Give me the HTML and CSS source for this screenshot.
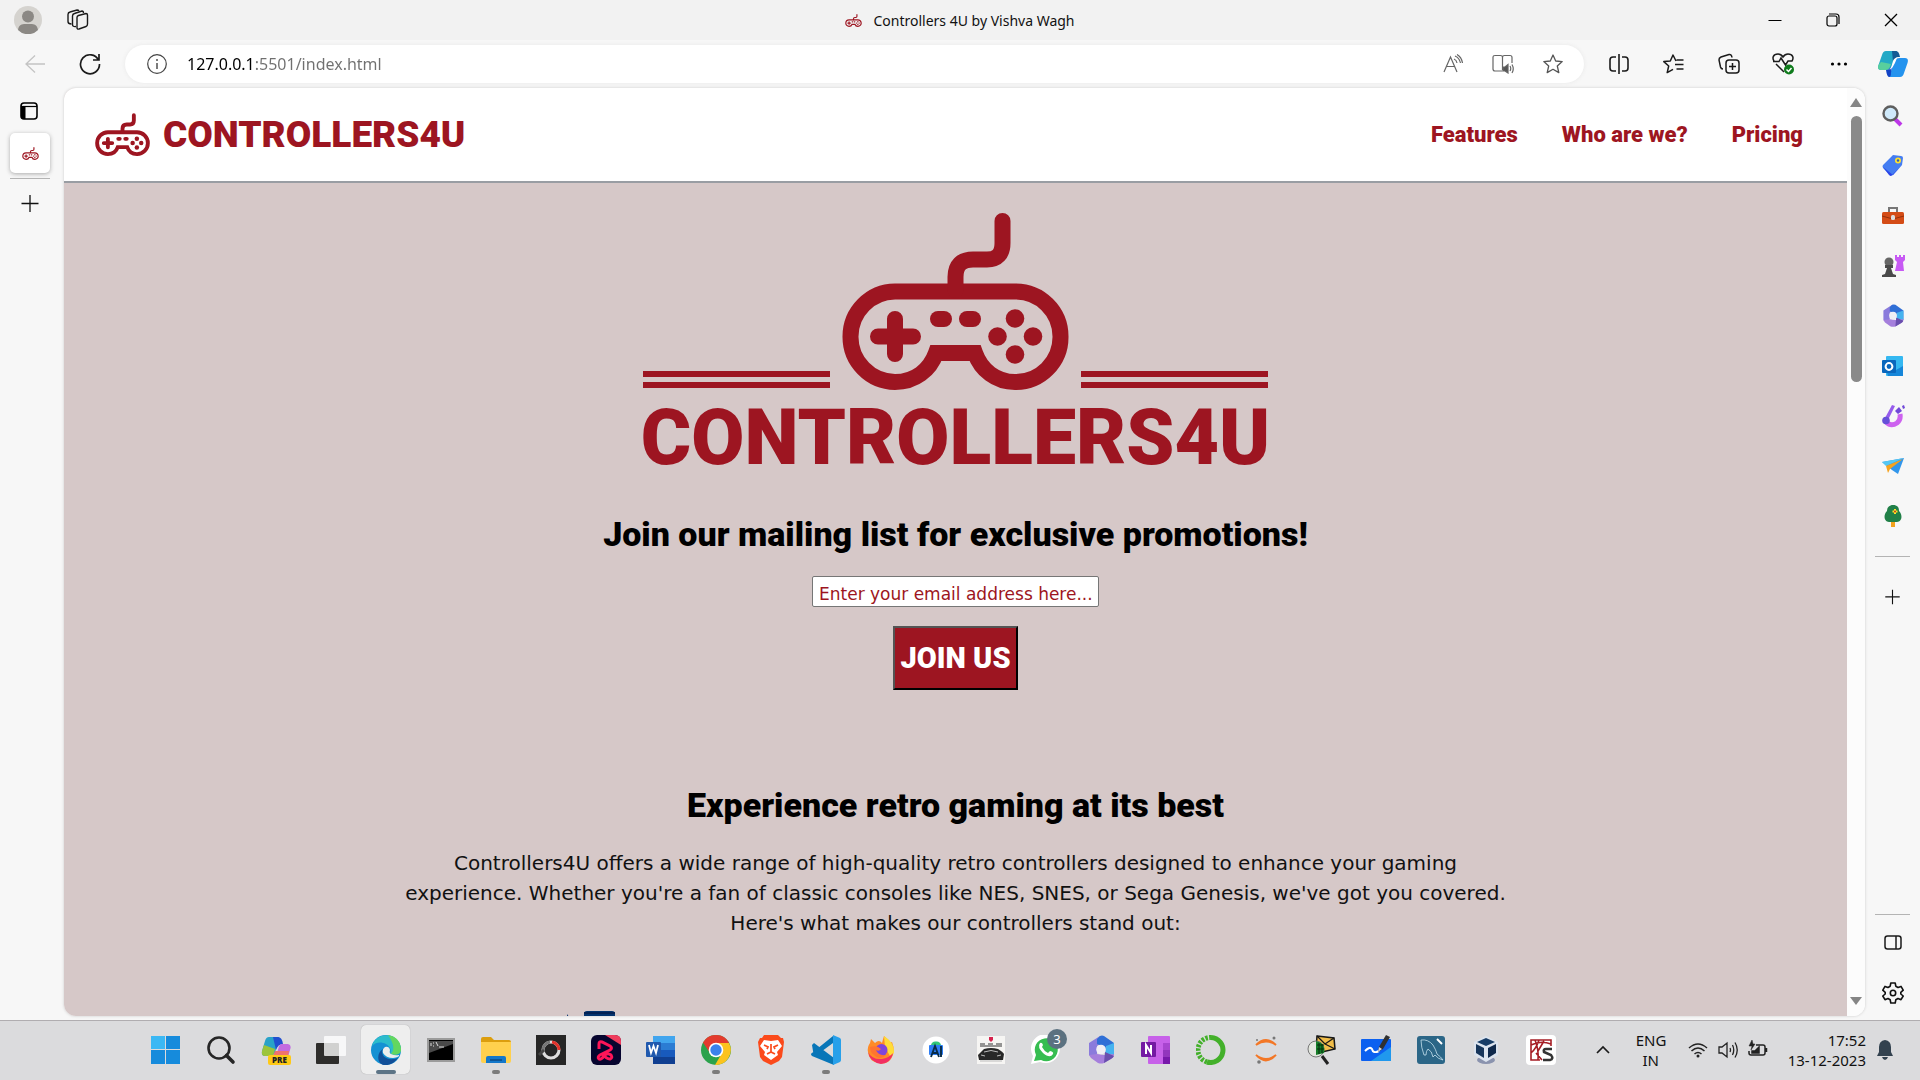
FILE: index.html
```html
<!DOCTYPE html>
<html lang="en">
<head>
<meta charset="utf-8">
<title>Controllers 4U by Vishva Wagh</title>
<link rel="stylesheet" href="styles.css">
</head>
<body>
<svg class="defs" aria-hidden="true">
  <symbol id="pad" viewBox="842 212 227 178">
    <g fill="none" stroke="#9d1521" stroke-width="16">
      <path d="M895 291.500H1015A45 45 0 0 1 1060.500 336.500A45 45 0 0 1 1015 382C996 382 981 370 975 353H936C930 370 915 382 895 382A45 45 0 0 1 850.500 336.500A45 45 0 0 1 895 291.500Z"/>
      <path stroke-linecap="round" d="M955.500 290V277Q955.500 259.500 973 259.500H987Q1002.500 259.500 1002.500 243V221M878 336.500H913M895 319V354"/>
    </g>
    <g fill="#9d1521"><rect x="930" y="311" width="22" height="16" rx="8"/><rect x="959" y="311" width="22" height="16" rx="8"/><circle cx="1015" cy="318.500" r="9.300"/><circle cx="1015" cy="354.500" r="9.300"/><circle cx="997.500" cy="336.500" r="9.300"/><circle cx="1033" cy="336.500" r="9.300"/></g>
  </symbol>
  <symbol id="plus" viewBox="0 0 20 20"><path d="M10 2V19M1.500 10.500H18.500" fill="none" stroke="#111" stroke-width="1.300"/></symbol>
  <symbol id="m365" viewBox="0 0 30 30">
    <path d="M14 1L3 8V20L8 24L11 19V11L21 5Z" fill="#8a7bdc"/>
    <path d="M14 1Q16 0 18 1L28 8V20L20 17L19 12L11 9V4Z" fill="#2f6fd6"/>
    <path d="M20 11L28 8V20L19 19Z" fill="#46b3ef"/>
    <path d="M3 20L11 19L18 20L28 19Q28 22 26 23L18 28Q15 29 12 28L5 23Z" fill="#a57fdc"/>
    <path d="M19 17L28 21Q27 23 25 24L18 28Z" fill="#6a4fae"/>
    <circle cx="15" cy="14.500" r="4.800" fill="#f0eff5"/>
  </symbol>
</svg>

<header class="titlebar">
  <div class="titlebar-left">
    <button class="icon-btn" aria-label="Profile"><svg width="28" height="28" viewBox="0 0 28 28"><circle cx="14" cy="14" r="14" fill="#d5d3cf"/><circle cx="14" cy="10.500" r="6" fill="#8b8884"/><path d="M4 24C5 17 10 18 14 18S23 17 24 24A14 14 0 0 1 4 24Z" fill="#8b8884"/></svg></button>
    <button class="icon-btn" aria-label="Workspaces"><svg width="22" height="22" viewBox="0 0 22 22" fill="none" stroke="#1b1b1b" stroke-width="1.400"><path d="M10 8.500Q10 7 11.500 6.500L19 4.500Q20.500 4.500 20.500 6V15Q20.500 17 19 17.500L12 20Q10 20.500 10 18.500Z"/><path d="M9 17.500Q5.500 18 5.500 15.500V7Q5.500 5 7.500 4.500L15 2Q16.500 2 16.500 4"/><path d="M4.500 15Q1 15 1 12.500V5.500Q1 3.500 3 3L10 1Q11.500 1 12 2"/></svg></button>
  </div>
  <div class="page-title"><svg width="17" height="13"><use href="#pad"/></svg><span>Controllers 4U by Vishva Wagh</span></div>
  <div class="window-controls">
    <button class="icon-btn" aria-label="Minimize"><svg width="14" height="14"><path d="M0.500 7.500H13.500" stroke="#000"/></svg></button>
    <button class="icon-btn" aria-label="Restore"><svg width="14" height="14" fill="none" stroke="#000" stroke-width="1.200"><rect x="1" y="3" width="10" height="10" rx="2"/><path d="M3 1H10Q13 1 13 4V11"/></svg></button>
    <button class="icon-btn" aria-label="Close"><svg width="14" height="14"><path d="M1 1L13 13M13 1L1 13" stroke="#000" stroke-width="1.300"/></svg></button>
  </div>
</header>

<div class="toolbar">
  <button class="icon-btn cell" aria-label="Back"><svg width="20" height="18" viewBox="0 0 20 18" fill="none" stroke="#c4c4c4" stroke-width="1.300"><path d="M20 9H1M10 0.500L1 9L10 17.500"/></svg></button>
  <button class="icon-btn cell" aria-label="Refresh"><svg width="22" height="22" viewBox="0 0 22 22" fill="none" stroke="#1b1b1b" stroke-width="1.700"><path d="M19.500 7A9.500 9.500 0 1 0 20.500 11M20 1V7H14"/></svg></button>
  <form class="address">
    <button type="button" class="icon-btn" aria-label="Site information"><svg width="20" height="20" fill="none" stroke="#444" stroke-width="1.200"><circle cx="10" cy="10" r="9.300"/><path d="M10 9V15M10 5V7" stroke-width="1.400"/></svg></button>
    <input class="url" type="text" aria-label="Address" value="127.0.0.1:5501/index.html">
    <button type="button" class="icon-btn tool" aria-label="Read aloud"><svg width="20" height="20" fill="none" stroke="#666" stroke-width="1.200"><path d="M1 18L7.500 3L14 18M3.500 12.500H11.500M11 5Q13.500 6 14 9M12 2Q16.500 4 17.500 9M14 0.500Q18.500 3 19.500 9"/></svg></button>
    <button type="button" class="icon-btn tool" aria-label="Immersive reader"><svg width="22" height="20" fill="none" stroke="#666" stroke-width="1.200"><path d="M10.500 2V16M10.500 17H3Q1 17 1 15V3Q1 1.500 3 1.500H8.500Q10.500 1.500 10.500 3.500Q10.500 1.500 12.500 1.500H18Q20 1.500 20 3.500V9"/><path d="M11 13H13L16 10.500V19L13 17H11Z" fill="#555"/><path d="M18 12Q19.500 14.500 18 17M20 10.500Q22.500 15 20 19"/></svg></button>
    <button type="button" class="icon-btn tool" aria-label="Add to favorites"><svg width="20" height="20" viewBox="0 0 20 20" fill="none" stroke="#555" stroke-width="1.300" stroke-linejoin="round"><path d="M10 1L12.700 7L19.200 7.600L14.300 12L15.800 18.600L10 15.300L4.200 18.600L5.700 12L.8 7.600L7.300 7Z"/></svg></button>
  </form>
  <button class="icon-btn cell" aria-label="Split screen"><svg width="20" height="20" fill="none" stroke="#1b1b1b" stroke-width="1.600"><path d="M10 0V20M7 3H4Q1 3 1 6V14Q1 17 4 17H7M13 3H16Q19 3 19 6V14Q19 17 16 17H13"/></svg></button>
  <button class="icon-btn cell" aria-label="Favorites"><svg width="21" height="20" fill="none" stroke="#1b1b1b" stroke-width="1.500" stroke-linejoin="round"><path d="M13 7L10 1L7.300 7L.8 7.600L5.700 12L4.200 18.600L10 15.300M13.500 6H20.500M12 10.500H20.500M13.500 15H20.500"/></svg></button>
  <button class="icon-btn cell" aria-label="Collections"><svg width="22" height="22" fill="none" stroke="#1b1b1b" stroke-width="1.500"><rect x="8" y="7" width="13" height="13" rx="3"/><path d="M14.500 10V17M11 13.500H18M5 16Q3 16 2.500 14L1 7Q.8 5 3 4L11 1.500Q13.500 1 14 4.500"/></svg></button>
  <button class="icon-btn cell" aria-label="Browser essentials"><svg width="23" height="23" fill="none" stroke="#1b1b1b" stroke-width="1.500"><path d="M2 9C0 6 1 2 6 2Q9 2 11 5Q13 2 16 2C21 2 22 6 20 9H16L13.500 13L9 6L7 9.500H1M4 12L12 20"/><circle cx="17" cy="17.500" r="5" fill="#0f7b1c" stroke="none"/><path d="M14.500 17.500L16.500 19.500L19.500 16" stroke="#fff"/></svg></button>
  <button class="icon-btn cell" aria-label="Settings and more"><svg width="18" height="6"><circle cx="2.500" cy="3" r="1.600"/><circle cx="9" cy="3" r="1.600"/><circle cx="15.500" cy="3" r="1.600"/></svg></button>
  <button class="icon-btn copilot" aria-label="Copilot"><svg width="30" height="26" viewBox="0 0 30 26"><path d="M8 0H19L14 15Q12 19 8 19H3Q-1 19 .5 14L4 4Q5 0 8 0Z" fill="#23a9c6"/><path d="M3 11L13 13Q11 19 8 19H3Q-1 19 .5 14Z" fill="#58cf9d"/><path d="M14 0H18Q21 0 22 6H20Q17 6 15 11Z" fill="#145a95"/><path d="M22 7H27Q31 7 29.500 12L26 22Q25 26 22 26H11L16 11Q17 7 22 7Z" fill="#2493ee"/><path d="M8 19Q12 19 14 14L13 22Q13 26 11 26Q9 26 8 19Z" fill="#1243c5"/><path d="M15 10Q16 7 19 7Q15 18 11 19Q13 18 15 10Z" fill="#fff"/></svg></button>
</div>

<div class="workspace">
  <aside class="tabs">
    <button class="icon-btn tab-toggle" aria-label="Tab actions"><svg width="18" height="18"><rect x="1" y="1" width="16" height="16" rx="3" fill="none" stroke="#000" stroke-width="1.600"/><path d="M1 4.500H17" stroke="#000" stroke-width="1.200"/><path d="M1 4H5.500V17H3L1 15Z"/></svg></button>
    <button class="tab" aria-label="Controllers 4U by Vishva Wagh"><svg width="17" height="13"><use href="#pad"/></svg></button>
    <hr>
    <button class="icon-btn new-tab" aria-label="New tab"><svg width="20" height="20"><use href="#plus"/></svg></button>
  </aside>

  <div class="viewport">
    <div class="site">
      <header class="site-header">
        <a class="brand" href="#top"><svg width="55" height="43"><use href="#pad"/></svg><span>CONTROLLERS4U</span></a>
        <nav><a href="#features">Features</a><a href="#about">Who are we?</a><a href="#pricing">Pricing</a></nav>
      </header>
      <main id="top">
        <section class="hero">
          <div class="emblem">
            <div class="bars"></div>
            <svg width="227" height="178"><use href="#pad"/></svg>
            <div class="bars"></div>
          </div>
          <h1>CONTROLLERS4U</h1>
          <h2>Join our mailing list for exclusive promotions!</h2>
          <form class="signup">
            <input type="email" aria-label="Email address" placeholder="Enter your email address here...">
            <button type="button">JOIN US</button>
          </form>
        </section>
        <section class="features" id="features">
          <h2>Experience retro gaming at its best</h2>
          <p>Controllers4U offers a wide range of high-quality retro controllers designed to enhance your gaming experience. Whether you're a fan of classic consoles like NES, SNES, or Sega Genesis, we've got you covered. Here's what makes our controllers stand out:</p>
          <svg class="art" width="780" height="60" viewBox="0 0 780 60"><path d="M19 60V31L1 3V60Z" fill="#07336d"/><rect x="18" y="0" width="31" height="50" rx="3" fill="#04346f"/><path d="M18 2H49" stroke="#042254" stroke-width="2"/></svg>
        </section>
      </main>
    </div>
    <div class="scrollbar" aria-hidden="true">
      <svg width="12" height="10"><path d="M6 0L12 9H0Z" fill="#858585"/></svg>
      <div class="thumb"></div>
      <svg width="12" height="10"><path d="M6 9L0 1H12Z" fill="#858585"/></svg>
    </div>
  </div>

  <aside class="sidebar">
    <button class="icon-btn" aria-label="Search"><svg width="24" height="24"><path d="M14 15L20 21" stroke="#bd36e8" stroke-width="4"/><circle cx="9.500" cy="9.500" r="7" fill="#cfe9fa" stroke="#5e5e5e" stroke-width="2.400"/></svg></button>
    <button class="icon-btn" aria-label="Shopping"><svg width="24" height="24"><path d="M12 1L20 2Q22 2 22 4L21 11L12 21Q10 22 9 21L2 14Q1 12 2 11Z" fill="#447df2"/><path d="M2 13L12 21L21 11L10 22Q9 22 8 21Z" fill="#2b45e8"/><circle cx="17" cy="6.500" r="3" fill="#ffe02e"/><circle cx="17" cy="6.500" r="1.200" fill="#2b60b8"/></svg></button>
    <button class="icon-btn" aria-label="Tools"><svg width="24" height="24"><path d="M8 8V4H16V8" fill="none" stroke="#777" stroke-width="2"/><rect x="1" y="8" width="22" height="12" rx="1.500" fill="#d44c16"/><path d="M1 12L12 15L23 12" stroke="#92300c" fill="none"/><rect x="10" y="11" width="4" height="5" rx="1.500" fill="#ddd"/></svg></button>
    <button class="icon-btn" aria-label="Games"><svg width="24" height="24"><path d="M14 1H16V3H18V1H20V3H22V1H24V6L22 8L23 17H14L16 8L14 6Z" fill="#c759f4"/><circle cx="8" cy="8" r="4.500" fill="#666"/><path d="M4 11H12V14H10L12 20L15 21V23H1V21L4 20L6 14H4Z" fill="#4a4a4a"/></svg></button>
    <button class="icon-btn" aria-label="Microsoft 365"><svg width="24" height="24"><use href="#m365"/></svg></button>
    <button class="icon-btn" aria-label="Outlook"><svg width="24" height="24"><rect x="5" y="2" width="17" height="20" rx="1" fill="#35b8f1"/><path d="M22 12V22H7L5 15L15 16Z" fill="#1686d9"/><rect x="1" y="6" width="14" height="13" rx="1" fill="#0a67bd"/><circle cx="8" cy="12.500" r="3.400" fill="none" stroke="#fff" stroke-width="2"/></svg></button>
    <button class="icon-btn" aria-label="Drop"><svg width="24" height="24"><path d="M5 18Q10 23 16 19Q20 16 19 10" fill="none" stroke="#cd62ef" stroke-width="5"/><path d="M11 1L14 2L7 16L4 14Z" fill="#965cec"/><circle cx="5" cy="16.500" r="3.800" fill="#6650d8"/><path d="M14 7L18 3L21 7L17 10ZM21 2L23 1L24 4L22 5Z" fill="#7048d8"/></svg></button>
    <button class="icon-btn" aria-label="Send"><svg width="24" height="24"><path d="M1 8L23 4L17 20L11 16Z" fill="#3296eb"/><path d="M1 8L23 4L5 12Z" fill="#55c7f3"/><path d="M5 12L22 5L9 15L7 19Z" fill="#f6a31e"/></svg></button>
    <button class="icon-btn" aria-label="Tree"><svg width="24" height="24"><rect x="10" y="15" width="4" height="8" fill="#f2a21e"/><path d="M12 1C17 1 18 4 18 7C22 11 21 18 16 18H8C3 18 2 11 6 7C6 4 8 1 12 1Z" fill="#218048"/><path d="M14 5V10M11.500 7.500H16.500" stroke="#ffe229" stroke-width="2"/><circle cx="14" cy="7.500" r="1" fill="#c1381d"/></svg></button>
    <hr>
    <button class="icon-btn add" aria-label="Customize"><svg width="17" height="17"><use href="#plus"/></svg></button>
    <div class="spacer"></div>
    <hr>
    <button class="icon-btn pane" aria-label="Hide sidebar"><svg width="18" height="15" fill="none" stroke="#1b1b1b" stroke-width="1.500"><rect x="1" y="1" width="16" height="13" rx="2.500"/><path d="M12 1V14"/></svg></button>
    <button class="icon-btn gear" aria-label="Settings"><svg width="22" height="22" viewBox="0 0 22 22" fill="none" stroke="#111" stroke-width="1.600" stroke-linejoin="round"><path d="M8.800 1H13.200L13.800 4.200L16 5.500L19 4.400L21.200 8.200L18.800 10.300V12L21.200 14L19 17.700L16 16.500L13.800 17.800L13.200 21H8.800L8.200 17.800L6 16.500L3 17.700L.8 14L3.200 12V10.300L.8 8.200L3 4.400L6 5.500L8.200 4.200Z"/><circle cx="11" cy="11" r="2.700"/></svg></button>
  </aside>
</div>

<footer class="taskbar">
  <div class="apps">
    <button aria-label="Start"><svg width="30" height="30"><path d="M0 1H14V14H0ZM15 1H29V14H15ZM0 15H14V29H0ZM15 15H29V29H15Z" fill="#168bdc"/><path d="M0 1H14V14H0Z" fill="#3bb8f4"/></svg></button>
    <button aria-label="Search"><svg width="30" height="30" fill="none" stroke="#262626"><circle cx="13" cy="13" r="10.500" stroke-width="2.600"/><path d="M20.500 20.500L27 27" stroke-width="3.600" stroke-linecap="round"/></svg></button>
    <button aria-label="Copilot preview"><svg width="30" height="30"><path d="M8 2H18L14 18Q12 21 9 21H4Q0 21 1 16L4 6Q5 2 8 2Z" fill="#29a2c8"/><path d="M3 10L14 14L12 21H4Q0 21 1 16Z" fill="#9bc43b"/><path d="M12 2H17Q21 2 22 9Q17 9 15 15Z" fill="#214fd0"/><path d="M20 9H27Q31 10 29 15L27 22H15L18 11Z" fill="#c36ae0"/><path d="M14 16H28L27 21H12Z" fill="#f0726c"/></svg><span class="pre">PRE</span></button>
    <button aria-label="Task view"><svg width="30" height="30"><rect x="0" y="8" width="23" height="21" rx="1" fill="#2e2d2b"/><rect x="8" y="1" width="22" height="20" rx="1" fill="#fff" opacity=".78"/></svg></button>
    <button class="active" aria-label="Edge"><svg width="30" height="30"><circle cx="15" cy="15" r="15" fill="#1591d3"/><path d="M1 11C5-3 26-4 30 13C31 19 25 21 20 19C18 18 21 17 19 13C16 7 6 5 1 11Z" fill="#2cbccb"/><path d="M17 0Q29 2 30 13C31 19 25 21 20 19C25 13 21 6 17 0Z" fill="#63d760"/><path d="M12 14C9 20 15 27 27 23Q21 31 13 30C5 28 6 17 12 14Z" fill="#124f98"/><path d="M20 19Q18 18 19 15Q18 11 14 12Q11 14 12 18Q15 23 22 23Q29 22 28 20Q24 21 20 19Z" fill="#ededed"/></svg></button>
    <button aria-label="Terminal"><svg width="28" height="24"><rect x="1" y="1" width="26" height="22" fill="#000" stroke="#9b9b9b" stroke-width="2"/><path d="M2 3H26V6L2 15Z" fill="#4a4a4a"/><path d="M4 5V8M6 5H7M6 8H7M9 4L11 8M12 9H17" stroke="#ddd"/></svg></button>
    <button class="open" aria-label="File Explorer"><svg width="30" height="30"><path d="M0 4Q0 2 2 2H10L13 5H28Q30 5 30 7V12H0Z" fill="#dc9e0e"/><path d="M0 7H30V26Q30 28 28 28H2Q0 28 0 26Z" fill="#ffd04d"/><path d="M5 28V23Q5 21 7 21H23Q25 21 25 23V28Z" fill="#1478ca"/><path d="M9 25H21" stroke="#0c4a85" stroke-width="1.500"/></svg></button>
    <button aria-label="Recorder"><svg width="30" height="30"><rect width="30" height="30" fill="#262626"/><circle cx="15" cy="15" r="8" fill="none" stroke="#ddd" stroke-width="3"/><path d="M16 7A8 8 0 0 1 23 15" fill="none" stroke="#e3322b" stroke-width="3"/><path d="M7 15A8 8 0 0 1 14 7" fill="none" stroke="#777" stroke-width="3"/><path d="M3 20L8 15" stroke="#444" stroke-width="3"/></svg></button>
    <button aria-label="Media editor"><svg width="30" height="30"><rect width="30" height="30" rx="6" fill="#07052f"/><path d="M14 0H24Q30 0 30 6V10Z" fill="#ef3d5d"/><path d="M8 14V9Q8 6 11 7L19 11Q22 13 19 15L9 20Q6 22 8 24Q10 25 13 21Q16 17 20 20Q22 23 19 24Q15 24 11 18" fill="none" stroke="#ff1558" stroke-width="3"/></svg></button>
    <button aria-label="Word"><svg width="30" height="30"><rect x="7" y="1" width="22" height="28" rx="1" fill="#185abd"/><path d="M7 1H29V8H7Z" fill="#41a5ee"/><path d="M7 8H29V15H7Z" fill="#2b7cd3"/><path d="M7 22H29V29H7Z" fill="#103f91"/><rect x="0" y="7" width="15" height="15" rx="1" fill="#2059ae"/><path d="M3 10L5 18L7.500 11L10 18L12 10" fill="none" stroke="#fff" stroke-width="1.800"/></svg></button>
    <button class="open" aria-label="Chrome"><svg width="30" height="30"><circle cx="15" cy="15" r="15" fill="#2ba24c"/><path d="M2 7.500A15 15 0 0 1 28 7.500L20 12L9 18Z" fill="#e33b2e"/><path d="M15 8H28A15 15 0 0 1 14 30L21 18Z" fill="#fcc31e"/><circle cx="15" cy="15" r="7.300" fill="#fff"/><circle cx="15" cy="15" r="5.700" fill="#3b82ec"/></svg></button>
    <button aria-label="Brave"><svg width="30" height="30"><path d="M8 0H22L25 3H27L28 7L26 22L23 26L15 30L7 26L4 22L2 7L4 3H6Z" fill="#fb4a1b"/><path d="M8 5L15 6L22 5L26 11L21 17L22 20L15 25L8 20L9 17L4 11Z" fill="#fff"/><path d="M8 10L12 12L11 14M22 10L18 12L19 14M15 9V18M11 19L15 17L19 19" fill="none" stroke="#fb4a1b" stroke-width="1.700"/></svg></button>
    <button class="open" aria-label="Visual Studio Code"><svg width="30" height="30"><path d="M1 10L3 8L23 23V30L1 21Q-1 19 1 18L22 1V8L3 22Z" fill="#0876b8"/><path d="M22 0L29 3Q30 4 30 5V25Q30 26 29 27L22 30Z" fill="#27a0ea"/></svg></button>
    <button aria-label="Firefox"><svg width="30" height="30"><path d="M18 1Q23 5 24 8L26 7Q30 17 25 24Q20 30 13 28Q3 27 2 17Q1 12 4 8L5 4L9 8Q13 4 16 8Q17 4 18 1Z" fill="#ff8b27"/><path d="M18 1Q29 8 28 18L24 21L19 12Z" fill="#ffdd39"/><path d="M2 17Q6 25 16 24Q23 23 27 18Q25 28 15 29Q4 27 2 17Z" fill="#f22f62"/><circle cx="15.500" cy="15" r="6" fill="#8046d9"/><path d="M4 12Q11 10 15 14Q13 17 10 15Q12 21 20 20Q14 26 8 20Q4 17 4 12Z" fill="#ff7430"/></svg></button>
    <button aria-label="Android Studio"><svg width="28" height="28"><circle cx="14" cy="14" r="13.500" fill="#fff"/><path d="M9 9Q10 5 14 5.500Q18 5 19 9Z" fill="#31c77b"/><rect x="7" y="9" width="14" height="10" rx="1" fill="#2d7df4"/><path d="M9 21L13 10L17 21M11 17H15M19 10V21" fill="none" stroke="#082c48" stroke-width="1.900"/></svg></button>
    <button aria-label="Asphalt"><svg width="30" height="30"><rect x="1" y="1" width="28" height="28" fill="#f6f5f3"/><path d="M13 2H17V5L15 7L13 5Z" fill="#d6214d"/><path d="M4 11H26M4 9H9M12 9H17M20 9H26" stroke="#333" fill="none"/><path d="M2 20Q5 17 8 14Q15 12 22 14Q27 17 28 19L27 25H3Z" fill="#272727"/><path d="M8 17Q15 14 22 17M5 20L9 21M25 20L21 21M4 26H26" fill="none" stroke="#bcbcbc"/></svg></button>
    <button aria-label="WhatsApp"><svg width="30" height="30"><path d="M0 29L2 21A14.500 14.500 0 1 1 9 27Z" fill="#fff"/><path d="M3 26L5 20A11.500 11.500 0 1 1 10 25Z" fill="#36bd50"/><path d="M9 8Q11 7 12 10L11 12Q13 16 17 18L19 16Q23 17 22 19Q19 24 12 18Q6 12 9 8Z" fill="#fff"/></svg><span class="badge">3</span></button>
    <button aria-label="Microsoft 365"><svg width="30" height="30"><use href="#m365"/></svg></button>
    <button aria-label="OneNote"><svg width="30" height="30"><rect x="7" y="1" width="22" height="28" rx="1" fill="#c761e9"/><path d="M22 8H29V15H22Z" fill="#a846cf"/><path d="M22 15H29V22H22Z" fill="#9236bd"/><path d="M22 22H29V29H22Z" fill="#7719aa"/><rect x="0" y="7" width="15" height="15" rx="1" fill="#741aa3"/><path d="M5 19V10L10 18V10" fill="none" stroke="#fff" stroke-width="2"/></svg></button>
    <button aria-label="Anaconda"><svg width="30" height="30" fill="none" stroke="#43b02a"><path d="M15 2.500A12.500 12.500 0 1 1 11 27" stroke-width="5"/><path d="M11 27A12.500 12.500 0 0 1 15 2.500" stroke-width="5" stroke-dasharray="2.500 1.300"/></svg></button>
    <button aria-label="Jupyter"><svg width="30" height="30" fill="none" stroke="#f37726"><path d="M5 10Q15 0 25 10Q15 3 5 10ZM5 20Q15 28 25 20Q15 31 5 20Z" stroke-width="1.800" fill="#f37726"/><g stroke="none" fill="#777"><circle cx="23" cy="3" r="1.500"/><circle cx="6" cy="5" r="1"/><circle cx="8" cy="27" r="1.800"/></g></svg></button>
    <button aria-label="Mail search"><svg width="30" height="30"><path d="M11 1L28 3L29 14L16 17L10 15Z" fill="#f1bd49" stroke="#171717" stroke-width="1.500"/><path d="M11 1L19 9L28 3M19 9L29 14" fill="none" stroke="#171717" stroke-width="1.300"/><circle cx="10" cy="14" r="8" fill="#e3e7df" stroke="#777"/><path d="M10 6Q20 8 18 18L10 20Z" fill="#157d28"/><path d="M11 10H18M11 14H18M13 8V19M16 9V18" stroke="#052d0b"/><path d="M16 21L22 29" stroke="#222" stroke-width="3"/></svg></button>
    <button aria-label="Whiteboard"><svg width="30" height="30"><rect y="4" width="30" height="22" rx="1" fill="#0b60f0"/><path d="M30 12V26H10Z" fill="#2098ed"/><path d="M4 16Q9 11 11 14Q12 19 18 16" fill="none" stroke="#fff" stroke-width="2"/><path d="M18 12L25 0L29 2L22 14L17 17Z" fill="#303030"/><path d="M17 17L18 12L21 14Z" fill="#d9d9d9"/></svg></button>
    <button aria-label="MySQL Workbench"><svg width="30" height="30"><rect x="1" y="1" width="28" height="28" rx="3" fill="#2b6687"/><path d="M8 20Q5 12 5 5Q12 4 17 10Q20 15 21 19Q25 22 27 25Q22 24 19 20L17 22Q16 16 12 14Q10 16 10 20Z" fill="none" stroke="#c5e1ee" stroke-width=".8"/><path d="M21 4L26 9" stroke="#fff" stroke-width="2"/></svg></button>
    <button aria-label="VirtualBox"><svg width="30" height="30"><ellipse cx="15" cy="25" rx="9" ry="4" fill="#8a93ae"/><path d="M15 1L27 7V20L15 27L3 20V7Z" fill="#dce4ef"/><path d="M15 3L24 7L15 11L6 7Z" fill="#173c66"/><path d="M5 9L13 13V23L5 18Z" fill="#17365b"/><path d="M25 9L17 13V23L25 18Z" fill="#0f294c"/></svg></button>
    <button aria-label="Code editor"><svg width="30" height="30"><rect width="30" height="30" rx="4" fill="#fff"/><path d="M14 25H5V5H25V11M5 10Q15 5 25 9M5 18Q10 14 13 5M9 5Q13 15 12 25M12 16L18 6M10 18L16 25" fill="none" stroke="#a51d25" stroke-width="1.600"/><path d="M26 14H20Q17 14 18 17L25 20Q28 24 24 25H17" fill="none" stroke="#333" stroke-width="2.500"/></svg></button>
  </div>
  <div class="tray">
    <button class="chevron" aria-label="Show hidden icons"><svg width="14" height="9"><path d="M1 8L7 2L13 8" fill="none" stroke="#1b1b1b" stroke-width="1.700"/></svg></button>
    <button class="lang"><span>ENG</span><span>IN</span></button>
    <button class="status" aria-label="Network, sound and battery">
      <svg width="20" height="20" fill="none" stroke="#222" stroke-width="1.500"><path d="M1 8Q10 0 19 8M3.500 11Q10 5 16.500 11M6.500 14Q10 11 13.500 14"/><circle cx="10" cy="16" r="1.500" fill="#222" stroke="none"/></svg>
      <svg width="20" height="20" fill="none" stroke="#222" stroke-width="1.300"><path d="M1 7H4L9 3V17L4 13H1ZM12 8Q13 10 12 12M14.500 5Q17 10 14.500 15M17 2.500Q21.500 10 17 17.500"/></svg>
      <svg width="20" height="20" fill="none" stroke="#222" stroke-width="1.500"><path d="M8 5H15Q17 5 17 7V13Q17 15 15 15H3Q1 15 1 13V11M18.500 8V12"/><path d="M4 13V11H7L11 7V13Z" fill="#222"/><path d="M4 0L1 6H4L3 10L7 4H5Z" fill="#222" stroke-width=".5"/></svg>
    </button>
    <button class="clock"><span>17:52</span><span>13-12-2023</span></button>
    <button class="bell" aria-label="Notifications"><svg width="16" height="20"><path d="M8 0Q14 1 14 7V12L16 16H0L2 12V7Q2 1 8 0ZM5 17H11Q10 20 8 20Q6 20 5 17Z" fill="#33424f"/></svg></button>
  </div>
</footer>
</body>
</html>
```
FILE: styles.css
```css
* { box-sizing: border-box; }
body {
  margin: 0;
  height: 100vh;
  display: flex;
  flex-direction: column;
  overflow: hidden;
  background: #f7f7f7;
  color: #111;
  font-family: "Noto Sans", "Open Sans", sans-serif;
}
button { padding: 0; border: 0; background: none; color: inherit; font: inherit; }
svg { display: block; flex: none; }
.defs { position: absolute; width: 0; height: 0; }
.icon-btn { display: flex; align-items: center; justify-content: center; }

/* Window frame */
.titlebar {
  height: 40px;
  flex: none;
  display: grid;
  grid-template-columns: 1fr auto 1fr;
  align-items: center;
  background: #f2f2f2;
}
.titlebar-left { display: flex; gap: 25px; padding-left: 14px; }
.page-title { display: flex; align-items: center; gap: 11px; font-size: 14px; }
.window-controls { display: flex; justify-content: flex-end; }
.window-controls .icon-btn { width: 58px; height: 40px; }

.toolbar { height: 47px; flex: none; display: flex; align-items: center; padding-left: 7px; }
.cell { width: 55px; }
.copilot { width: 54px; }
.address {
  flex: 1;
  height: 38px;
  margin: 0 7px 0 8px;
  padding: 0 6px 0 22px;
  display: flex;
  align-items: center;
  border-radius: 19px;
  background: #fff;
  box-shadow: 0 0 4px #e8e8e8;
}
.tool { width: 50px; }
.url {
  flex: 1;
  min-width: 0;
  margin-left: 20px;
  padding: 0;
  border: 0;
  font: 16px/24px "Noto Sans", "Open Sans", sans-serif;
  color: transparent;
  background: linear-gradient(90deg, #000 68px, #707070 68px);
  -webkit-background-clip: text;
  background-clip: text;
}

.workspace { flex: 1; min-height: 0; display: flex; padding: 1px 0 4px; }
.tabs { width: 64px; flex: none; display: flex; flex-direction: column; align-items: flex-start; padding: 14px 0 0 10px; }
.tab-toggle { width: 38px; height: 18px; }
.tab {
  width: 40px;
  height: 40px;
  margin-top: 13px;
  display: flex;
  align-items: center;
  justify-content: center;
  border-radius: 5px;
  background: #fff;
  box-shadow: 0 1px 4px #aaa;
}
hr { margin: 0; border: 0; height: 1px; background: #b4b4b4; }
.tabs hr { width: 40px; margin-top: 5px; }
.new-tab { width: 40px; margin-top: 14px; }

.viewport {
  flex: 1;
  min-width: 0;
  display: flex;
  overflow: hidden;
  border-radius: 12px;
  background: #fff;
  box-shadow: 0 0 3px #c8c8c8;
}
.scrollbar { width: 18px; padding: 10px 0; display: flex; flex-direction: column; align-items: center; background: #fcfcfc; }
.thumb { width: 11px; height: 266px; margin: 8px 0 auto; border-radius: 6px; background: #8a8a8a; }

/* Site */
.site { flex: 1; min-width: 0; overflow: hidden; background: #d6c8c8; }
.site-header {
  height: 95px;
  padding: 0 44px 0 31px;
  display: flex;
  align-items: center;
  justify-content: space-between;
  background: #fff;
  border-bottom: 2px solid #999da3;
}
.site-header a { color: #9d1521; text-decoration: none; font-family: Roboto, sans-serif; font-weight: 900; }
.brand { display: flex; align-items: center; gap: 13px; font-size: 37px; }
nav { display: flex; gap: 44px; font-size: 22px; }
h1, h2 { margin: 0; font-family: Roboto, sans-serif; font-weight: 900; text-align: center; }
h1 { margin-top: 10px; font-size: 77px; line-height: 76px; color: #9d1521; }
h2 { font-size: 34px; line-height: 40px; color: #000; }
.hero { padding-top: 29px; display: flex; flex-direction: column; align-items: center; }
.hero h2 { margin-top: 38px; }
.emblem { width: 625px; display: grid; grid-template-columns: 1fr 227px 1fr; gap: 12px; align-items: end; }
.bars { height: 17px; margin-bottom: 2px; border: solid #9d1521; border-width: 6px 0; }
.signup { margin-top: 22px; display: flex; flex-direction: column; align-items: center; gap: 19px; }
.signup input {
  width: 287px;
  height: 31px;
  padding: 4px 6px 0;
  border: 1px solid #767676;
  border-radius: 2px;
  background: #fff;
  font: 17px "DejaVu Sans", sans-serif;
}
.signup input::placeholder { color: #9d1521; opacity: 1; }
.signup button {
  width: 125px;
  height: 64px;
  border: 2px outset #000;
  background: #9d1521;
  color: #fff;
  font: 900 29px Roboto, sans-serif;
}
.features { margin-top: 95px; display: flex; flex-direction: column; align-items: center; }
.features p { max-width: 1116px; margin: 23px 0 0; font: 20px/30px "DejaVu Sans", sans-serif; text-align: center; }
.art { margin-top: 73px; }

/* Edge sidebar */
.sidebar { width: 55px; flex: none; display: flex; flex-direction: column; align-items: center; padding-top: 3px; }
.sidebar .icon-btn { width: 55px; height: 50px; }
.sidebar hr { width: 35px; margin-top: 15px; flex: none; }
.sidebar .add { height: 78px; }
.spacer { flex: 1; }
.sidebar .pane { height: 55px; }
.sidebar .gear { height: 46px; }

/* Taskbar */
.taskbar {
  height: 60px;
  flex: none;
  display: flex;
  justify-content: space-between;
  padding: 0 0 2px 138px;
  border-top: 1px solid #b0adb0;
  background: #dbdbdd;
}
.apps { display: flex; align-items: center; }
.apps button { position: relative; width: 55px; height: 57px; display: flex; align-items: center; justify-content: center; }
.apps .active { width: 49px; height: 49px; margin: 0 3px; border-radius: 5px; background: #eee; box-shadow: 0 0 1px #999; }
.apps .active::after, .apps .open::after {
  content: "";
  position: absolute;
  left: 50%;
  bottom: 4px;
  width: 8px;
  height: 4px;
  margin-left: -4px;
  border-radius: 2px;
  background: #7b7b7b;
}
.apps .active::after { bottom: 0; width: 20px; margin-left: -10px; background: #5d7486; }
.badge {
  position: absolute;
  top: 8px;
  right: 6px;
  width: 20px;
  height: 20px;
  border-radius: 50%;
  background: #5b7180;
  color: #fff;
  font-size: 13px;
  line-height: 20px;
}
.pre {
  position: absolute;
  right: 12px;
  bottom: 13px;
  width: 23px;
  border-radius: 2px;
  background: #ffc915;
  color: #222;
  font: 800 8px/10px "Open Sans", sans-serif;
}
.tray { display: flex; align-items: center; padding-right: 27px; font-size: 15px; line-height: 20px; }
.tray span { display: block; }
.chevron { margin-right: 26px; }
.lang { width: 30px; margin-right: 22px; text-align: center; }
.status { display: flex; gap: 10px; margin-right: 20px; }
.clock { margin-right: 11px; text-align: right; }
```
